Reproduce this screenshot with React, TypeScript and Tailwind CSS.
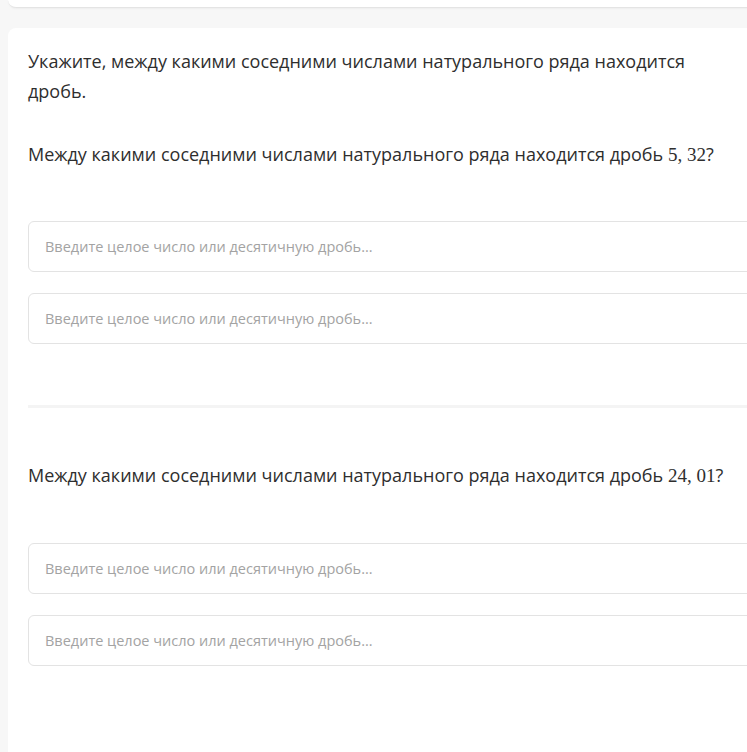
export default function App() {
  const placeholder = 'Введите целое число или десятичную дробь...';

  const Field = ({ className = '' }: { className?: string }) => (
    <div
      className={`h-[51px] w-full rounded-md border border-[#e3e3e3] bg-white pl-4 flex items-center text-[14.5px] text-[#a3a3a3] ${className}`}
    >
      {placeholder}
    </div>
  );

  const Question = ({ n }: { n: string }) => (
    <p className="text-[18px] leading-[30px] text-[#2e2e2e]">
      Между какими соседними числами натурального ряда находится дробь{' '}
      <span className="font-['Liberation_Serif','DejaVu_Serif',serif] text-[19px]">{n}</span>?
    </p>
  );

  return (
    <div className="w-[747px] h-[752px] overflow-hidden bg-[#f7f7f7] font-['Open_Sans','Noto_Sans',sans-serif]">
      {/* previous card, only its bottom edge is visible */}
      <div className="ml-2 h-2 w-[800px] bg-white border-b border-[#e4e4e4] rounded-bl-lg shadow-[0_1px_2px_rgba(0,0,0,0.04)]" />

      {/* task card */}
      <div className="mt-5 ml-2 w-[800px] min-h-[740px] bg-white rounded-tl-lg pl-5 pr-8 pt-[18px]">
        <p className="text-[18px] leading-[30px] text-[#2e2e2e] w-[675px]">
          Укажите, между какими соседними числами натурального ряда находится дробь.
        </p>

        <div className="mt-[33px]">
          <Question n="5, 32" />
        </div>
        <Field className="mt-[51px]" />
        <Field className="mt-[21px]" />

        <div className="mt-[61px] h-[3px] bg-[#f4f4f4]" />

        <div className="mt-[52px]">
          <Question n="24, 01" />
        </div>
        <Field className="mt-[52px]" />
        <Field className="mt-[21px]" />
      </div>
    </div>
  );
}
